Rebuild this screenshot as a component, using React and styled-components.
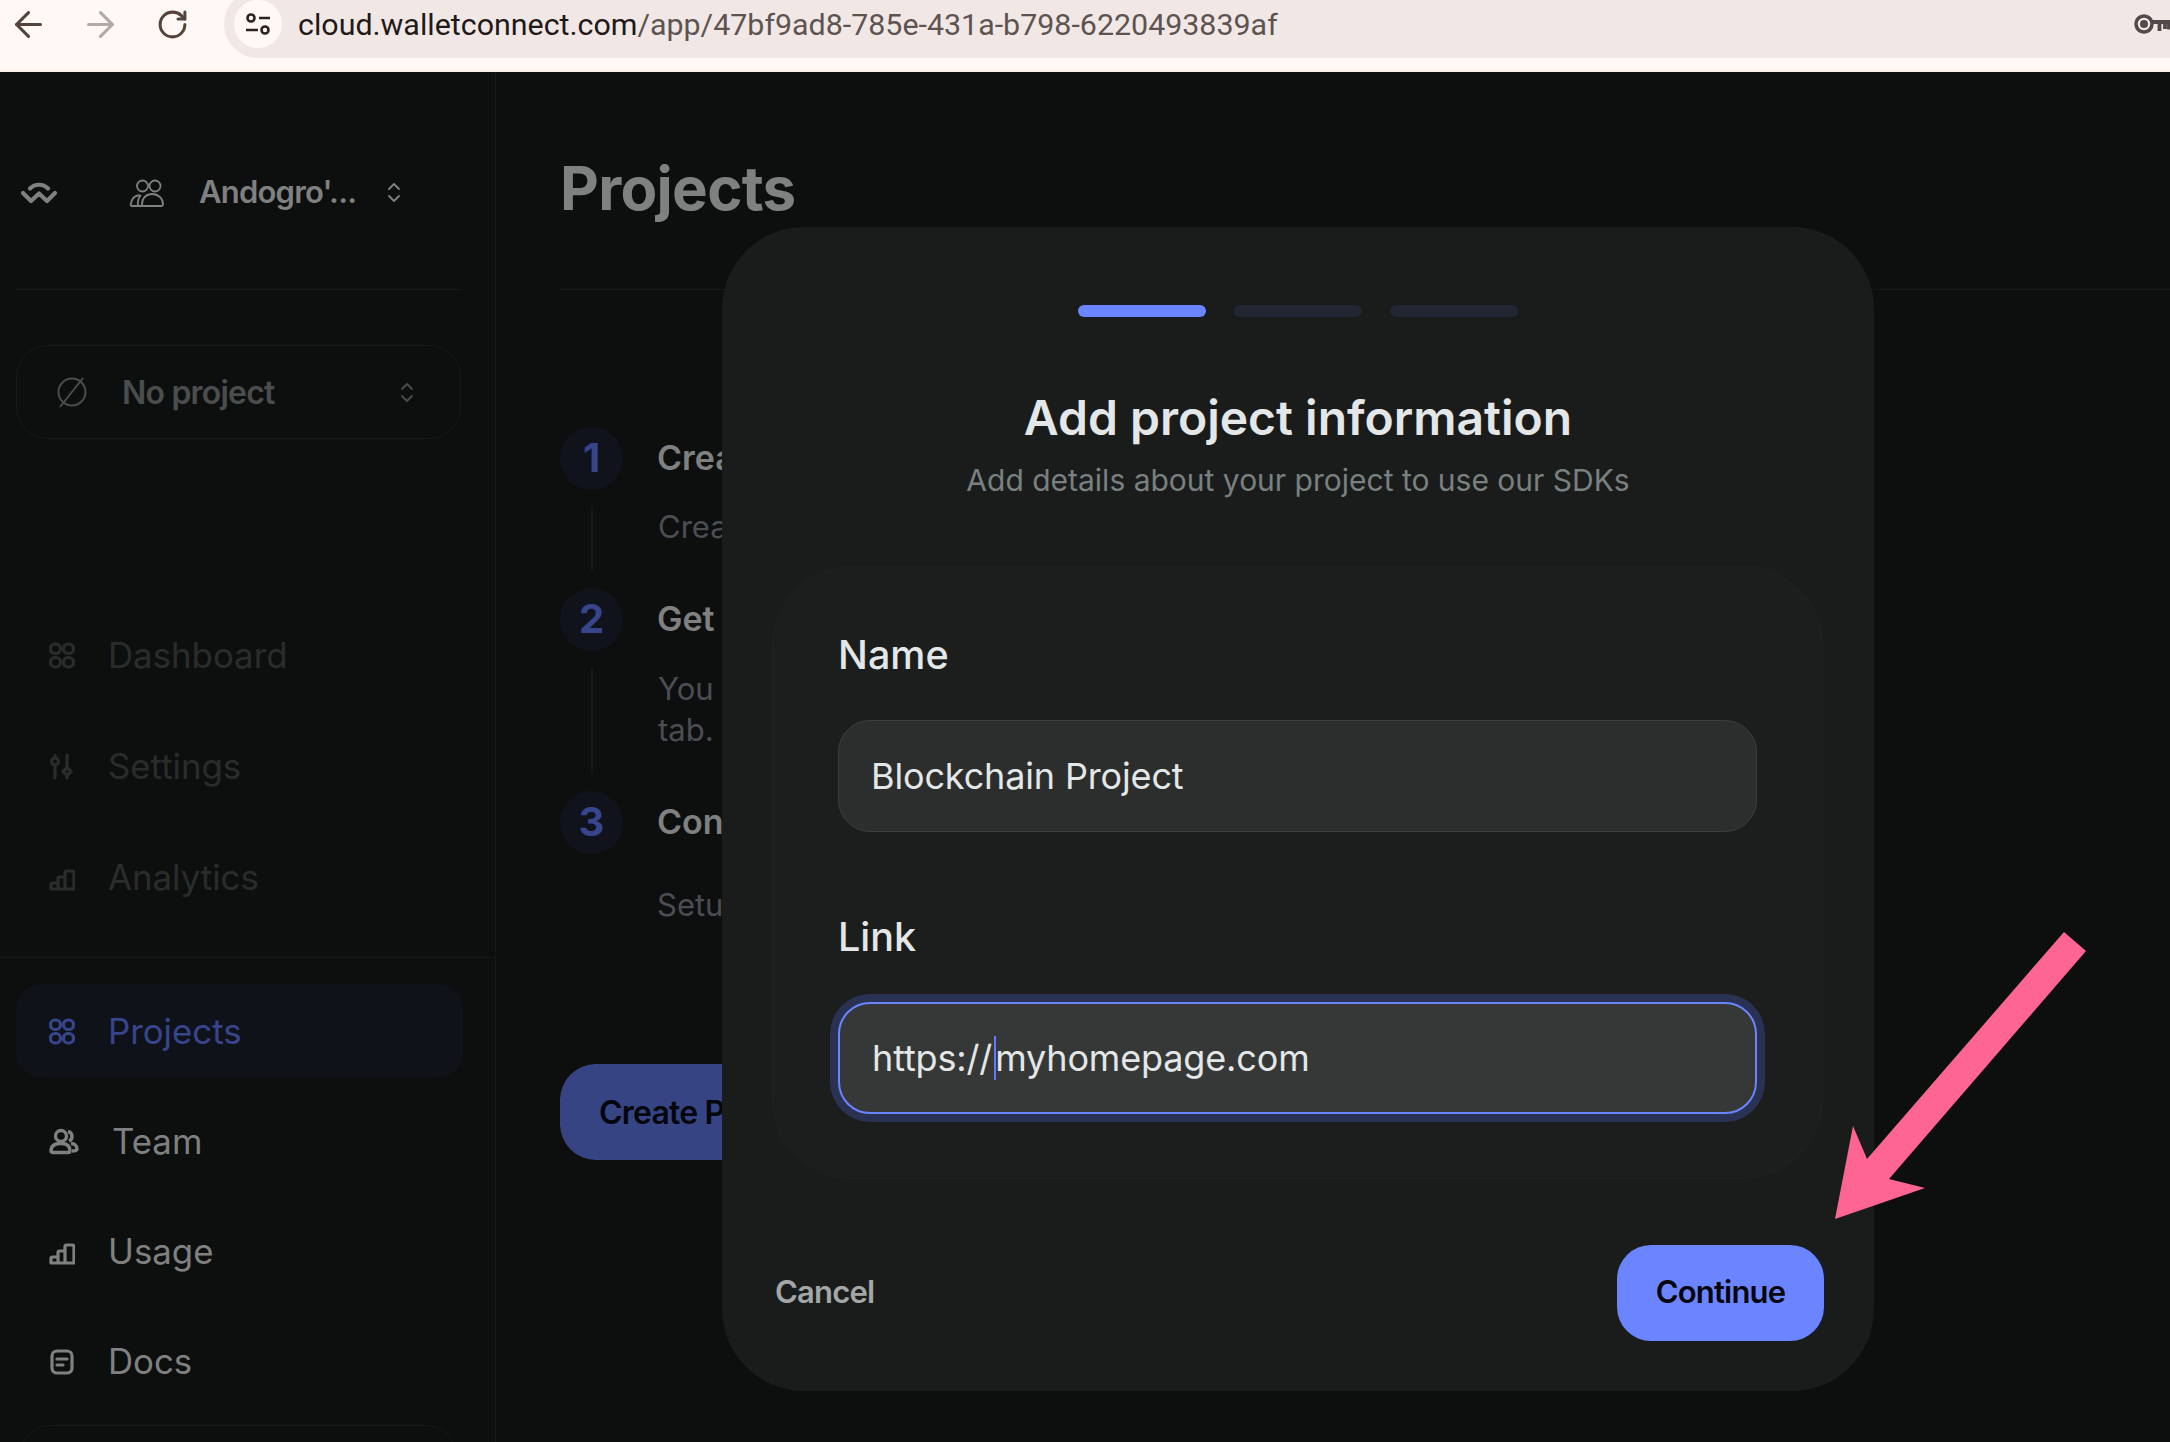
import React from "react";
import styled, { createGlobalStyle } from "styled-components";
import { ArrowLeft, ArrowRight, RotateCw } from "lucide-react";

const GlobalStyle = createGlobalStyle`
  html, body {
    margin: 0;
    padding: 0;
    background: #0d0f0f;
    font-family: "Inter", "Liberation Sans", sans-serif;
  }
  * { box-sizing: border-box; }
`;

const DIM = "#2a2c2c";
const MUTED = "#7f8080";
const ACTIVE = "#36458c";

const GridIcon = ({ color }) => (
  <svg width="26" height="27" viewBox="0 0 26 27" fill="none" stroke={color} strokeWidth="3.200">
    <rect x="1.500" y="2" width="10" height="9.500" rx="4.500" />
    <rect x="14.500" y="2" width="10" height="9.500" rx="4.500" />
    <rect x="1.500" y="15.500" width="10" height="9.500" rx="4.500" />
    <rect x="14.500" y="15.500" width="10" height="9.500" rx="4.500" />
  </svg>
);

const SlidersIcon = ({ color }) => (
  <svg width="26" height="27" viewBox="0 0 26 27" fill="none" stroke={color} strokeWidth="3.200" strokeLinecap="round">
    <path d="M6 2v3M6 12v13M18 2v13M18 22v3" />
    <circle cx="6" cy="8.500" r="3.500" />
    <path d="M18 14.500l4 4-4 4-4-4z" />
  </svg>
);

const BarsIcon = ({ color }) => (
  <svg width="26" height="27" viewBox="0 0 26 27" fill="none" stroke={color} strokeWidth="3.200" strokeLinejoin="round">
    <path d="M2 20.500a1.500 1.500 0 0 1 1.500-1.500H9v6H2zM9 14.500a1.500 1.500 0 0 1 1.500-1.500H16v12H9zM16 8.500A1.500 1.500 0 0 1 17.500 7h6A1.500 1.500 0 0 1 25 8.500V25h-9z" />
  </svg>
);

const TeamIcon = ({ color }) => (
  <svg width="30" height="27" viewBox="0 0 30 27" fill="none" stroke={color} strokeWidth="3.400" strokeLinejoin="round">
    <circle cx="12" cy="8" r="5.500" />
    <path d="M19 3.500a5 5 0 0 1 1 9.500" />
    <path d="M2 23c0-5 4-7.500 10-7.500s9 3 9 7.500c0 1-1 1.500-2 1.500H4c-1 0-2-.5-2-1.500z" />
    <path d="M22 15.500c3.500 0 6 2 6 5.500 0 1.500-2 2-5 2" />
  </svg>
);

const DocIcon = ({ color }) => (
  <svg width="26" height="27" viewBox="0 0 26 27" fill="none" stroke={color} strokeWidth="3.200" strokeLinecap="round">
    <rect x="3" y="3" width="20" height="22" rx="5" />
    <path d="M8 11h10M8 17h6" />
  </svg>
);

const Updown = () => (
  <svg width="14" height="21" viewBox="0 0 14 21" fill="none" stroke="currentColor" strokeWidth="1.800" strokeLinecap="round" strokeLinejoin="round">
    <path d="M2 7l5-5 5 5M2 14l5 5 5-5" />
  </svg>
);

const Logo = () => (
  <svg width="38" height="24" viewBox="0 0 38 24" fill="none" stroke={MUTED} strokeWidth="4.200" strokeLinejoin="round" strokeLinecap="round">
    <path d="M10 7.500c5-5 13-5 18 0" />
    <path d="M3 12l8 8 8-7.500 8 7.500 8-8" />
  </svg>
);

const PeopleIcon = () => (
  <svg width="36" height="28" viewBox="0 0 36 28" fill="none" stroke={MUTED} strokeWidth="1.800" strokeLinejoin="round">
    <circle cx="13.500" cy="7" r="5.500" />
    <circle cx="26" cy="7" r="5.500" />
    <path d="M14 27H3c-1 0-1.500-.8-1.300-1.700C2.500 21 5 17 9 16.500h2.500C9 19.500 8.500 23 9 27" />
    <path d="M13 25c0-5.500 4-10 10-10s11 4.500 11 10c0 1.500-1 2-2 2H15c-1 0-2-.5-2-2z" />
  </svg>
);

const NoneIcon = () => (
  <svg width="32" height="32" viewBox="0 0 32 32" fill="none" stroke="#4a4d4d" strokeWidth="2">
    <circle cx="16" cy="16" r="13.500" />
    <path d="M27 2L4 31" />
  </svg>
);

const TuneIcon = () => (
  <svg width="26" height="24" viewBox="0 0 26 24" fill="none" stroke="#2a2322" strokeWidth="2.600">
    <circle cx="6" cy="6" r="3.500" />
    <path d="M14 6h11M1 18h12" />
    <circle cx="20" cy="18" r="3.500" />
  </svg>
);

const KeyIcon = () => (
  <svg width="36" height="22" viewBox="0 0 36 22" fill="none" stroke="#54494a" strokeWidth="3.500">
    <circle cx="10" cy="11" r="8" />
    <circle cx="10" cy="11" r="4" fill="#54494a" stroke="none" />
    <path d="M18 9h17v7.500M25.500 9v9M31 9v7" strokeWidth="3.800" />
  </svg>
);

const Page = styled.div`
  position: relative;
  width: 2170px;
  height: 1442px;
  overflow: hidden;
  background: #0d0f0f;
`;

const BrowserBar = styled.header`
  display: flex;
  align-items: flex-start;
  height: 72px;
  background: #fff8f5;
  border-bottom: 2px solid #fcefe8;
`;

const NavButton = styled.div`
  display: flex;
  width: 42px;
  height: 48px;
  margin-left: ${(p) => p.$left}px;
  align-items: center;
  justify-content: center;
  color: ${(p) => p.$color};
`;

const Omnibox = styled.div`
  display: flex;
  flex: 1;
  align-items: center;
  height: 68px;
  margin: -10px 0 0 31px;
  padding: 10px 0 0 10px;
  background: #f1e8e6;
  border-radius: 34px 0 0 34px;
`;

const SiteBadge = styled.div`
  display: flex;
  width: 48px;
  height: 48px;
  margin-top: -10px;
  flex-shrink: 0;
  align-items: center;
  justify-content: center;
  background: #fff8f5;
  border-radius: 50%;
`;

const Url = styled.div`
  flex: 1;
  margin: -10px 0 0 16px;
  font-family: "Roboto", "Liberation Sans", sans-serif;
  font-size: 30.400px;
  color: #5d5452;
  span { color: #1f1a18; }
`;

const KeySlot = styled.div`
  display: flex;
  width: 36px;
  margin-top: -10px;
`;

const Body = styled.div`
  display: flex;
  height: 1370px;
`;

const Sidebar = styled.aside`
  width: 496px;
  flex-shrink: 0;
  border-right: 1px solid #151717;
`;

const SideHeader = styled.div`
  display: flex;
  align-items: center;
  height: 218px;
  margin: 0 34px 0 16px;
  padding: 24px 0 0 4px;
  border-bottom: 1px solid #161818;
  color: ${MUTED};
`;

const TeamName = styled.div`
  margin: 0 31px 3px 34px;
  font-size: 31px;
  font-weight: 600;
  letter-spacing: -0.8px;
`;

const LogoSlot = styled.div`
  display: flex;
  margin-right: 71px;
`;

const ProjectSelect = styled.div`
  display: flex;
  align-items: center;
  width: 445px;
  height: 94px;
  margin: 55px 0 0 16px;
  padding: 0 46px 0 39px;
  border: 1px solid #161818;
  border-radius: 32px;
  color: #4a4d4d;
  font-size: 32px;
  font-weight: 600;
  letter-spacing: -0.8px;
`;

const ProjectLabel = styled.div`
  flex: 1;
  margin-left: 34px;
`;

const NavGroup = styled.nav`
  display: flex;
  flex-direction: column;
  gap: ${(p) => p.$gap}px;
  margin-top: ${(p) => p.$top}px;
`;

const NavRow = styled.div`
  display: flex;
  align-items: center;
  gap: 33px;
  width: 447px;
  height: 94px;
  margin-left: 16px;
  padding-left: 33px;
  border-radius: 26px;
  background: ${(p) => (p.$active ? "#10121a" : "transparent")};
  color: ${(p) => p.$color};
  font-size: 34.800px;
  font-weight: 400;
`;

const SideDivider = styled.div`
  height: 1px;
  margin-top: 33px;
  background: #161818;
`;

const BottomCard = styled.div`
  width: 436px;
  height: 60px;
  margin: 17px 0 0 20px;
  border: 1px solid #161818;
  border-radius: 32px;
`;

const Main = styled.main`
  flex: 1;
  padding-left: 64px;
`;

const MainHeader = styled.div`
  display: flex;
  align-items: center;
  height: 218px;
  padding-top: 15px;
  border-bottom: 1px solid #161818;
`;

const PageTitle = styled.h1`
  margin: 0;
  font-size: 60px;
  font-weight: 700;
  color: ${MUTED};
  letter-spacing: -0.7px;
`;

const Steps = styled.div`
  margin-top: 137px;
`;

const Step = styled.div`
  display: flex;
  gap: 34px;
`;

const StepRail = styled.div`
  display: flex;
  flex-direction: column;
  align-items: center;
  width: 63px;
`;

const StepCircle = styled.div`
  display: flex;
  flex-shrink: 0;
  width: 63px;
  height: 63px;
  padding-bottom: 2px;
  align-items: center;
  justify-content: center;
  border-radius: 50%;
  background: #10131c;
  color: ${ACTIVE};
  font-size: 40px;
  font-weight: 700;
`;

const StepLine = styled.div`
  flex: 1;
  width: 2px;
  margin: 16px 0 17px;
  background: #161818;
`;

const StepText = styled.div`
  padding-bottom: ${(p) => p.$bottom}px;
  white-space: nowrap;
`;

const StepTitle = styled.div`
  height: 63px;
  line-height: 62px;
  font-size: 34px;
  font-weight: 600;
  color: ${MUTED};
`;

const StepBody = styled.div`
  margin-top: ${(p) => p.$top}px;
  margin-left: ${(p) => p.$left}px;
  font-size: 31px;
  line-height: 41px;
  color: #4a4e53;
`;

const CreateButton = styled.div`
  display: flex;
  width: 320px;
  height: 96px;
  margin-top: 97px;
  padding-left: 39px;
  align-items: center;
  border-radius: 36px;
  background: #364484;
  color: #05060c;
  font-size: 32px;
  font-weight: 600;
  letter-spacing: -0.8px;
  white-space: nowrap;
`;

const Modal = styled.section`
  position: absolute;
  top: 227px;
  left: 722px;
  width: 1152px;
  height: 1164px;
  padding-top: 78px;
  background: #1a1c1c;
  border-radius: 82px;
`;

const Progress = styled.div`
  display: flex;
  justify-content: center;
  gap: 28px;
`;

const ProgressBar = styled.div`
  width: 128px;
  height: 12px;
  border-radius: 6px;
  background: ${(p) => (p.$on ? "#6b84ff" : "#222633")};
`;

const ModalTitle = styled.h2`
  margin: 72px 0 0;
  font-size: 48px;
  line-height: 58px;
  font-weight: 600;
  text-align: center;
  color: #e4e7e7;
`;

const ModalSub = styled.p`
  margin: 13px 0 0;
  font-size: 30px;
  line-height: 40px;
  text-align: center;
  color: #798080;
`;

const FormCard = styled.div`
  width: 1051px;
  height: 613px;
  margin: 66px 0 0 50px;
  padding: 65px;
  background: #1c1e1e;
  border: 1px solid #202222;
  border-radius: 80px;
`;

const FieldLabel = styled.div`
  margin-top: ${(p) => p.$top}px;
  font-size: 39.500px;
  line-height: 46px;
  font-weight: 500;
  color: #e4e7e7;
`;

const Input = styled.div`
  display: flex;
  align-items: center;
  height: 112px;
  margin-top: 42px;
  padding: 0 32px;
  border-radius: 32px;
  font-size: 36px;
  letter-spacing: -0.15px;
  color: #e4e7e7;
  background: ${(p) => (p.$focus ? "#363838" : "#2c2e2e")};
  border: ${(p) => (p.$focus ? "2px solid #6b84ff" : "1px solid #3b3e3e")};
  box-shadow: ${(p) => (p.$focus ? "0 0 0 8px #293252" : "none")};
`;

const Caret = styled.span`
  display: inline-block;
  width: 2px;
  height: 44px;
  margin: 0 -1px 0 2px;
  background: #5f7bff;
`;

const ModalFooter = styled.div`
  display: flex;
  align-items: center;
  justify-content: space-between;
  margin-top: 66px;
  padding: 0 50px 0 53px;
`;

const CancelButton = styled.div`
  margin-bottom: 3px;
  font-size: 31px;
  font-weight: 600;
  letter-spacing: -0.8px;
  color: #a3a7a7;
`;

const ContinueButton = styled.div`
  display: flex;
  width: 207px;
  height: 96px;
  padding-bottom: 3px;
  align-items: center;
  justify-content: center;
  border-radius: 34px;
  background: #6b84ff;
  color: #05060c;
  font-size: 31px;
  font-weight: 600;
  letter-spacing: -0.8px;
`;

const Annotation = styled.svg`
  position: absolute;
  top: 0;
  left: 0;
  pointer-events: none;
`;

const App = () => {
  return (
    <Page>
      <GlobalStyle />
      <BrowserBar>
        <NavButton $left={7} $color="#54433a"><ArrowLeft size={41} strokeWidth={1.800} /></NavButton>
        <NavButton $left={30} $color="#b5a9a5"><ArrowRight size={41} strokeWidth={1.800} /></NavButton>
        <NavButton $left={30} $color="#54433a"><RotateCw size={33} strokeWidth={2.200} /></NavButton>
        <Omnibox>
          <SiteBadge><TuneIcon /></SiteBadge>
          <Url><span>cloud.walletconnect.com</span>/app/47bf9ad8-785e-431a-b798-6220493839af</Url>
          <KeySlot><KeyIcon /></KeySlot>
        </Omnibox>
      </BrowserBar>
      <Body>
        <Sidebar>
          <SideHeader>
            <LogoSlot><Logo /></LogoSlot>
            <PeopleIcon />
            <TeamName>Andogro'...</TeamName>
            <Updown />
          </SideHeader>
          <ProjectSelect>
            <NoneIcon />
            <ProjectLabel>No project</ProjectLabel>
            <Updown />
          </ProjectSelect>
          <NavGroup $top={169} $gap={17}>
            <NavRow $color={DIM}><GridIcon color={DIM} />Dashboard</NavRow>
            <NavRow $color={DIM}><SlidersIcon color={DIM} />Settings</NavRow>
            <NavRow $color={DIM}><BarsIcon color={DIM} />Analytics</NavRow>
          </NavGroup>
          <SideDivider />
          <NavGroup $top={26} $gap={16}>
            <NavRow $active $color={ACTIVE}><GridIcon color={ACTIVE} />Projects</NavRow>
            <NavRow $color={MUTED}><TeamIcon color={MUTED} />Team</NavRow>
            <NavRow $color={MUTED}><BarsIcon color={MUTED} />Usage</NavRow>
            <NavRow $color={MUTED}><DocIcon color={MUTED} />Docs</NavRow>
          </NavGroup>
          <BottomCard />
        </Sidebar>
        <Main>
          <MainHeader>
            <PageTitle>Projects</PageTitle>
          </MainHeader>
          <Steps>
            <Step>
              <StepRail>
                <StepCircle>1</StepCircle>
                <StepLine />
              </StepRail>
              <StepText $bottom={41}>
                <StepTitle>Create</StepTitle>
                <StepBody $top={16} $left={1}>Create</StepBody>
              </StepText>
            </Step>
            <Step>
              <StepRail>
                <StepCircle>2</StepCircle>
                <StepLine />
              </StepRail>
              <StepText $bottom={41}>
                <StepTitle>Get</StepTitle>
                <StepBody $top={17} $left={1}>You<br />tab.</StepBody>
              </StepText>
            </Step>
            <Step>
              <StepRail>
                <StepCircle>3</StepCircle>
              </StepRail>
              <StepText $bottom={42}>
                <StepTitle>Connect</StepTitle>
                <StepBody $top={30} $left={0}>Setup</StepBody>
              </StepText>
            </Step>
          </Steps>
          <CreateButton>Create Project</CreateButton>
        </Main>
      </Body>
      <Modal>
        <Progress>
          <ProgressBar $on />
          <ProgressBar />
          <ProgressBar />
        </Progress>
        <ModalTitle>Add project information</ModalTitle>
        <ModalSub>Add details about your project to use our SDKs</ModalSub>
        <FormCard>
          <FieldLabel $top={0}>Name</FieldLabel>
          <Input>Blockchain Project</Input>
          <FieldLabel $top={82}>Link</FieldLabel>
          <Input $focus>https://<Caret />myhomepage.com</Input>
        </FormCard>
        <ModalFooter>
          <CancelButton>Cancel</CancelButton>
          <ContinueButton>Continue</ContinueButton>
        </ModalFooter>
      </Modal>
      <Annotation width="2170" height="1442" viewBox="0 0 2170 1442">
        <polygon fill="#ff6592" points="2064,932 2086,951 1889,1179 1925,1188 1835,1219 1853,1126 1867,1159" />
      </Annotation>
    </Page>
  );
};

export default App;
